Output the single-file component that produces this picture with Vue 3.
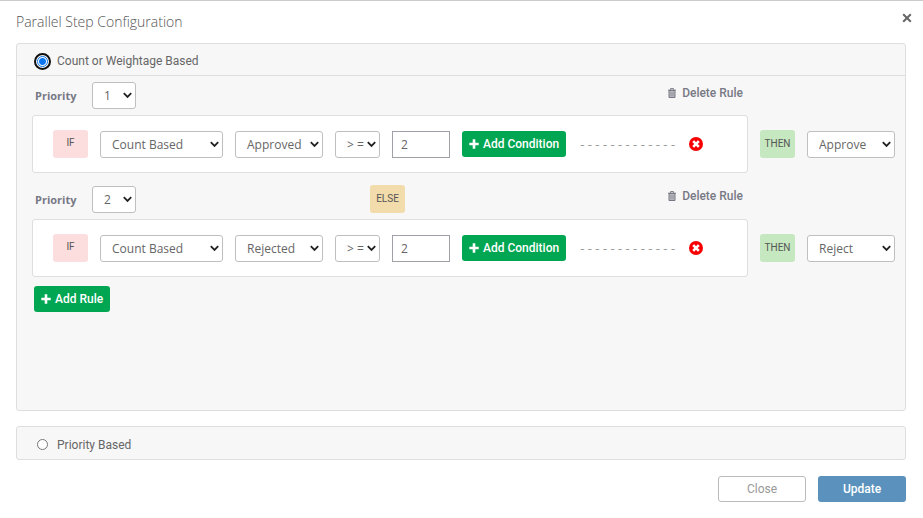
<template>
  <form class="dialog" @submit.prevent>
    <header class="dialog-header">
      <h1 class="dialog-title">Parallel Step Configuration</h1>
      <button type="button" class="dialog-close" aria-label="Close dialog">
        <svg width="10" height="10" viewBox="0 0 10 10">
          <path d="M1.2 1.2 8.8 8.8M8.8 1.2 1.2 8.8" stroke="#666" stroke-width="2" />
        </svg>
      </button>
    </header>

    <section class="panel panel-rules">
      <label class="panel-header">
        <input v-model="mode" class="radio" type="radio" name="mode" value="count" />
        <span>Count or Weightage Based</span>
      </label>

      <div class="rules">
        <div v-for="(rule, i) in rules" :key="rule.id" class="rule">
          <div class="rule-top">
            <div class="priority">
              <label class="priority-label" :for="`priority-${rule.id}`">Priority</label>
              <select :id="`priority-${rule.id}`" v-model="rule.priority" class="control priority-select">
                <option v-for="n in rules.length" :key="n" :value="n">{{ n }}</option>
              </select>
            </div>
            <span v-if="i > 0" class="tag tag-else">ELSE</span>
            <button type="button" class="delete-rule" @click="deleteRule(i)">
              <svg width="8" height="10" viewBox="0 0 8 10" fill="none" stroke="#777985">
                <path d="M2.5 1.8V.6h3v1.2M0 2.2h8" />
                <path d="M1 2.5h6v7H1z" fill="#b9bac0" />
                <path d="M3 4v4.2M5 4v4.2" stroke-width=".6" />
              </svg>
              Delete Rule
            </button>
          </div>

          <div class="rule-body">
            <div class="condition">
              <span class="tag tag-if">IF</span>
              <select v-model="rule.type" class="control type-select" aria-label="Condition type">
                <option>Count Based</option>
                <option>Weightage Based</option>
              </select>
              <select v-model="rule.status" class="control status-select" aria-label="Status">
                <option>Approved</option>
                <option>Rejected</option>
              </select>
              <select v-model="rule.operator" class="control operator-select" aria-label="Operator">
                <option>&gt; =</option>
                <option>&lt; =</option>
                <option>=</option>
              </select>
              <input v-model="rule.value" class="value-input" type="text" aria-label="Value" />
              <button type="button" class="btn btn-green">
                <svg width="10" height="10" viewBox="0 0 10 10">
                  <path d="M5 .3v9.4M.3 5h9.4" stroke="#fff" stroke-width="2.6" />
                </svg>
                Add Condition
              </button>
              <span class="dashes">- - - - - - - - - - - - -</span>
              <button type="button" class="remove" aria-label="Remove condition">
                <svg width="14" height="14" viewBox="0 0 14 14">
                  <circle cx="7" cy="7" r="7" fill="#f80000" />
                  <path d="m4.2 4.2 5.6 5.6M9.8 4.2 4.2 9.8" stroke="#fff" stroke-width="2.6" />
                </svg>
              </button>
            </div>
            <span class="tag tag-then">THEN</span>
            <select v-model="rule.action" class="control action-select" aria-label="Action">
              <option>Approve</option>
              <option>Reject</option>
            </select>
          </div>
        </div>

        <button type="button" class="btn btn-green add-rule" @click="addRule">
          <svg width="10" height="10" viewBox="0 0 10 10">
            <path d="M5 .3v9.4M.3 5h9.4" stroke="#fff" stroke-width="2.6" />
          </svg>
          Add Rule
        </button>
      </div>
    </section>

    <section class="panel">
      <label class="panel-header">
        <input v-model="mode" class="radio" type="radio" name="mode" value="priority" />
        <span>Priority Based</span>
      </label>
    </section>

    <footer class="dialog-footer">
      <button type="button" class="btn btn-close">Close</button>
      <button type="submit" class="btn btn-update">Update</button>
    </footer>
  </form>
</template>

<script setup>
  import { ref } from 'vue'

  const mode = ref('count')
  let nextId = 3

  const rules = ref([
    { id: 1, priority: 1, type: 'Count Based', status: 'Approved', operator: '> =', value: '2', action: 'Approve' },
    { id: 2, priority: 2, type: 'Count Based', status: 'Rejected', operator: '> =', value: '2', action: 'Reject' },
  ])

  function addRule() {
    rules.value.push({
      id: nextId++,
      priority: rules.value.length + 1,
      type: 'Count Based',
      status: 'Approved',
      operator: '> =',
      value: '',
      action: 'Approve',
    })
  }

  function deleteRule(index) {
    rules.value.splice(index, 1)
  }
</script>

<style>
  body {
    margin: 0;
    background: #fff;
  }
</style>

<style scoped>
  .dialog,
  .dialog * {
    box-sizing: border-box;
  }

  .dialog {
    border-top: 1px solid #ccc;
    padding: 0 17px 16px 16px;
    font-family: Roboto, 'Liberation Sans', sans-serif;
    font-size: 12px;
    color: #666;
  }

  button {
    font-family: inherit;
    cursor: pointer;
  }

  svg {
    display: block;
    flex: none;
  }

  .dialog-header {
    display: flex;
    align-items: center;
    justify-content: space-between;
    height: 42px;
  }

  .dialog-title {
    margin: 0;
    font-family: 'Open Sans', 'Noto Sans', sans-serif;
    font-size: 14px;
    font-weight: 300;
    line-height: 20px;
    color: #555;
  }

  .dialog-close {
    align-self: flex-start;
    margin: 12px -6px 0 0;
    padding: 0;
    border: 0;
    background: none;
  }

  .panel {
    margin-bottom: 15px;
    border: 1px solid #dedede;
    border-radius: 3px;
    background: #f7f7f7;
  }

  .panel-header {
    display: flex;
    align-items: center;
    gap: 9px;
    height: 32px;
    padding: 3px 20px 0;
  }

  .panel-rules {
    min-height: 368px;
  }

  .panel-rules .panel-header {
    border-bottom: 1px solid #dedede;
  }

  .radio {
    appearance: none;
    flex: none;
    width: 11px;
    height: 11px;
    margin: 0;
    border: 1px solid #777;
    border-radius: 50%;
    background: #fff;
  }

  .radio:checked {
    border-color: #0b76ef;
    background: radial-gradient(circle, #0b76ef 3px, #fff 4px);
    outline: 2px solid #101010;
    outline-offset: 1px;
  }

  .rules {
    padding: 0 10px 16px 15px;
  }

  .rule-top {
    display: grid;
    grid-template-columns: 1fr auto 1fr;
    align-items: center;
    height: 39px;
    margin-right: 147px;
    padding-right: 5px;
  }

  .rule + .rule .rule-top {
    height: 46px;
    padding-top: 6px;
  }

  .priority {
    display: flex;
    align-items: center;
    padding-left: 3px;
  }

  .priority-label {
    width: 57px;
    font-family: 'Open Sans', 'Noto Sans', sans-serif;
    font-size: 11px;
    font-weight: 700;
    color: #777985;
  }

  .delete-rule {
    display: flex;
    grid-column: 3;
    align-items: center;
    justify-self: end;
    gap: 6px;
    margin-bottom: 6px;
    padding: 0;
    border: 0;
    background: none;
    font-size: 12px;
    font-weight: 500;
    color: #777985;
  }

  .rule-body {
    display: flex;
    align-items: center;
    gap: 12px;
  }

  .condition {
    display: flex;
    flex: 1;
    align-items: center;
    height: 58px;
    padding: 0 20px;
    border: 1px solid #dedede;
    border-radius: 3px;
    background: #fff;
    gap: 12px;
  }

  .tag {
    flex: none;
    width: 35px;
    height: 28px;
    border-radius: 3px;
    font-size: 10px;
    line-height: 28px;
    text-align: center;
    color: #555;
  }

  .tag-if {
    background: #fddede;
    line-height: 25px;
  }

  .tag-then {
    background: #c6e8c0;
  }

  .tag-else {
    grid-column: 2;
    background: #f2dcab;
  }

  .control,
  .value-input {
    flex: none;
    height: 27px;
    margin: 0;
    border: 1px solid #bfbfbf;
    background-color: #fff;
    font-family: 'Open Sans', 'Noto Sans', sans-serif;
    font-size: 12px;
    color: #666;
  }

  .control {
    appearance: none;
    padding: 0 0 0 11px;
    border-radius: 3px;
    background-image: url("data:image/svg+xml,%3Csvg xmlns='http://www.w3.org/2000/svg' width='9' height='7' fill='none' stroke='%23222' stroke-width='1.8'%3E%3Cpath d='M.8 1.2 4.5 5 8.2 1.2'/%3E%3C/svg%3E");
    background-repeat: no-repeat;
    background-position: right 3px center;
  }

  .priority-select {
    width: 44px;
  }

  .type-select {
    width: 123px;
  }

  .status-select {
    width: 88px;
  }

  .operator-select {
    width: 45px;
  }

  .action-select {
    width: 88px;
  }

  .value-input {
    width: 58px;
    padding: 0 8px;
    border-color: #a0a0a8;
    border-radius: 0;
  }

  .btn {
    display: flex;
    flex: none;
    align-items: center;
    justify-content: center;
    gap: 4px;
    height: 26px;
    padding: 0 7px;
    border: 0;
    border-radius: 3px;
    font-size: 12px;
    font-weight: 500;
    white-space: nowrap;
  }

  .btn-green {
    background: #00a651;
    color: #fff;
  }

  .add-rule {
    margin: 9px 0 0 2px;
  }

  .dashes {
    min-width: 99px;
    font-family: 'Open Sans', 'Noto Sans', sans-serif;
    font-size: 13px;
    text-align: center;
    white-space: nowrap;
    color: #999;
  }

  .remove {
    padding: 0;
    border: 0;
    background: none;
  }

  .dialog-footer {
    display: flex;
    justify-content: flex-end;
    gap: 12px;
    padding-top: 1px;
  }

  .btn-close,
  .btn-update {
    width: 88px;
  }

  .btn-close {
    border: 1px solid #bbb;
    background: #fff;
    font-weight: 400;
    color: #999;
  }

  .btn-update {
    background: #5a92bd;
    color: #fff;
  }
</style>
